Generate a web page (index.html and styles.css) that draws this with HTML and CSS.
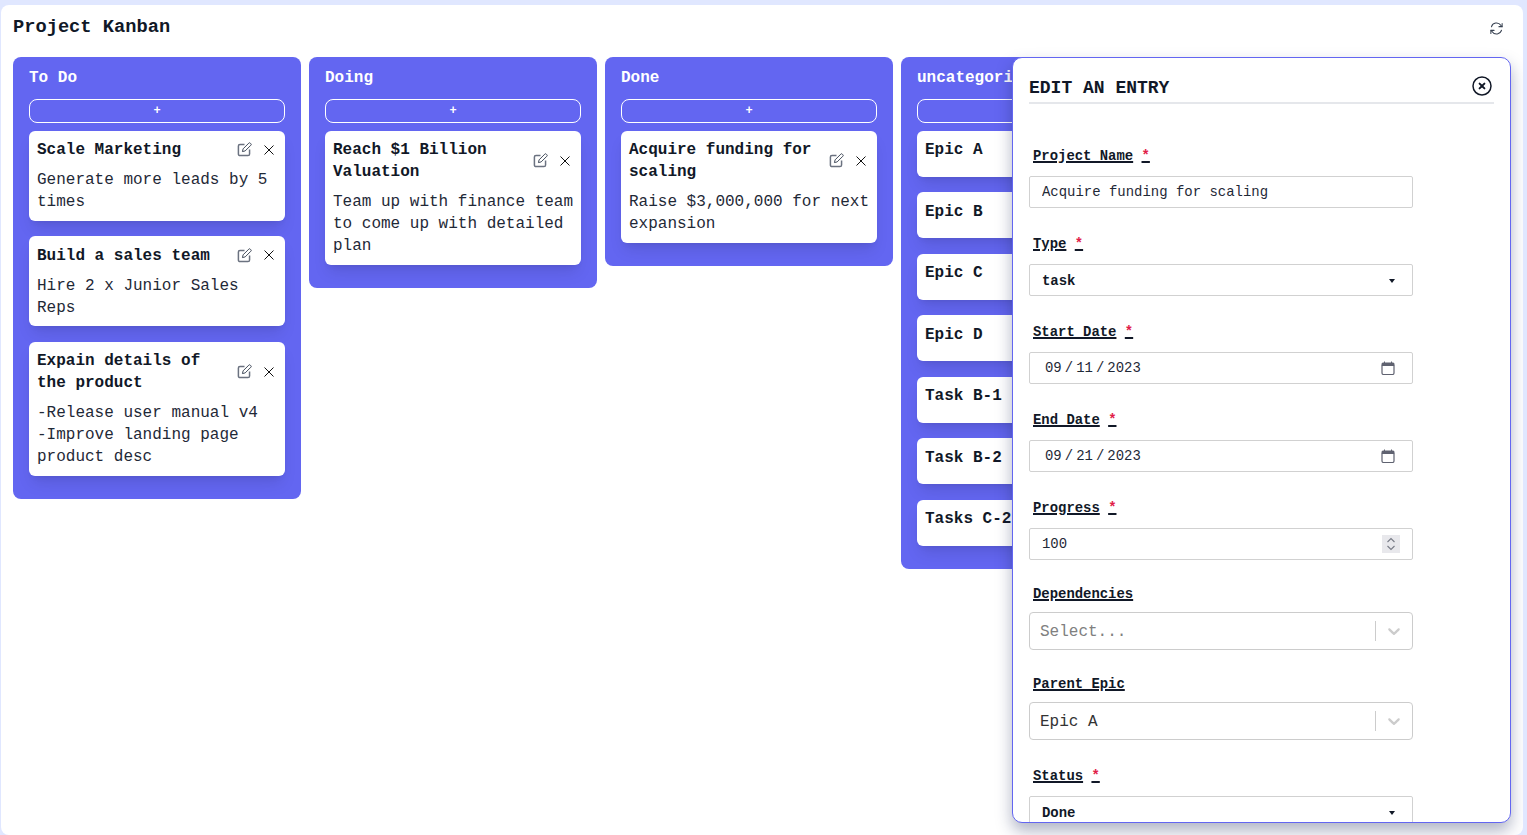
FILE: index.html
```html
<!DOCTYPE html>
<html lang="en">
<head>
<meta charset="utf-8">
<title>Project Kanban</title>
<link rel="stylesheet" href="styles.css">
</head>
<body>
<main class="panel">
  <header class="top">
    <h1 class="page-title">Project Kanban</h1>
    <button class="icon-btn refresh" aria-label="Refresh">
      <svg viewBox="0 0 16 16" width="15" height="15" fill="none" stroke="#374151" stroke-width="1.1" stroke-linecap="round" stroke-linejoin="round"><path d="M2.6 6.2A5.6 5.6 0 0 1 12.6 4.6L13.9 6"/><path d="M13.4 9.8A5.6 5.6 0 0 1 3.4 11.4L2.1 10"/><path d="M14 2.6V6h-3.4"/><path d="M2 13.4V10h3.4"/></svg>
    </button>
  </header>
  <section class="board">
    <div class="col">
      <h2 class="col-title">To Do</h2>
      <button class="add">+</button>
      <article class="card">
        <div class="card-head"><h3 class="card-title">Scale Marketing</h3>
          <div class="card-icons"><svg class="ico-edit" viewBox="0 0 16 16"><path d="M8 2.6H3.2A1.7 1.7 0 0 0 1.5 4.3v8.5a1.7 1.7 0 0 0 1.7 1.7h8.5a1.7 1.7 0 0 0 1.7-1.7V8"/><path class="pen" d="M5.8 10.2l.7-2.9L12.6 1.2a1 1 0 0 1 1.5 0l.7.7a1 1 0 0 1 0 1.5L8.7 9.5z"/></svg><svg class="ico-x" viewBox="0 0 12 12"><path d="M1.5 1.5l9 9M10.5 1.5l-9 9"/></svg></div></div>
        <p class="card-desc">Generate more leads by 5 times</p>
      </article>
      <article class="card">
        <div class="card-head"><h3 class="card-title">Build a sales team</h3>
          <div class="card-icons"><svg class="ico-edit" viewBox="0 0 16 16"><path d="M8 2.6H3.2A1.7 1.7 0 0 0 1.5 4.3v8.5a1.7 1.7 0 0 0 1.7 1.7h8.5a1.7 1.7 0 0 0 1.7-1.7V8"/><path class="pen" d="M5.8 10.2l.7-2.9L12.6 1.2a1 1 0 0 1 1.5 0l.7.7a1 1 0 0 1 0 1.5L8.7 9.5z"/></svg><svg class="ico-x" viewBox="0 0 12 12"><path d="M1.5 1.5l9 9M10.5 1.5l-9 9"/></svg></div></div>
        <p class="card-desc">Hire 2 x Junior Sales Reps</p>
      </article>
      <article class="card">
        <div class="card-head"><h3 class="card-title">Expain details of the product</h3>
          <div class="card-icons"><svg class="ico-edit" viewBox="0 0 16 16"><path d="M8 2.6H3.2A1.7 1.7 0 0 0 1.5 4.3v8.5a1.7 1.7 0 0 0 1.7 1.7h8.5a1.7 1.7 0 0 0 1.7-1.7V8"/><path class="pen" d="M5.8 10.2l.7-2.9L12.6 1.2a1 1 0 0 1 1.5 0l.7.7a1 1 0 0 1 0 1.5L8.7 9.5z"/></svg><svg class="ico-x" viewBox="0 0 12 12"><path d="M1.5 1.5l9 9M10.5 1.5l-9 9"/></svg></div></div>
        <p class="card-desc">-Release user manual v4<br>-Improve landing page product desc</p>
      </article>
    </div>
    <div class="col">
      <h2 class="col-title">Doing</h2>
      <button class="add">+</button>
      <article class="card">
        <div class="card-head"><h3 class="card-title">Reach $1 Billion Valuation</h3>
          <div class="card-icons"><svg class="ico-edit" viewBox="0 0 16 16"><path d="M8 2.6H3.2A1.7 1.7 0 0 0 1.5 4.3v8.5a1.7 1.7 0 0 0 1.7 1.7h8.5a1.7 1.7 0 0 0 1.7-1.7V8"/><path class="pen" d="M5.8 10.2l.7-2.9L12.6 1.2a1 1 0 0 1 1.5 0l.7.7a1 1 0 0 1 0 1.5L8.7 9.5z"/></svg><svg class="ico-x" viewBox="0 0 12 12"><path d="M1.5 1.5l9 9M10.5 1.5l-9 9"/></svg></div></div>
        <p class="card-desc">Team up with finance team to come up with detailed plan</p>
      </article>
    </div>
    <div class="col">
      <h2 class="col-title">Done</h2>
      <button class="add">+</button>
      <article class="card">
        <div class="card-head"><h3 class="card-title">Acquire funding for scaling</h3>
          <div class="card-icons"><svg class="ico-edit" viewBox="0 0 16 16"><path d="M8 2.6H3.2A1.7 1.7 0 0 0 1.5 4.3v8.5a1.7 1.7 0 0 0 1.7 1.7h8.5a1.7 1.7 0 0 0 1.7-1.7V8"/><path class="pen" d="M5.8 10.2l.7-2.9L12.6 1.2a1 1 0 0 1 1.5 0l.7.7a1 1 0 0 1 0 1.5L8.7 9.5z"/></svg><svg class="ico-x" viewBox="0 0 12 12"><path d="M1.5 1.5l9 9M10.5 1.5l-9 9"/></svg></div></div>
        <p class="card-desc">Raise $3,000,000 for next expansion</p>
      </article>
    </div>
    <div class="col">
      <h2 class="col-title">uncategorized</h2>
      <button class="add">+</button>
      <article class="card"><div class="card-head"><h3 class="card-title">Epic A</h3></div><p class="card-desc"></p></article>
      <article class="card"><div class="card-head"><h3 class="card-title">Epic B</h3></div><p class="card-desc"></p></article>
      <article class="card"><div class="card-head"><h3 class="card-title">Epic C</h3></div><p class="card-desc"></p></article>
      <article class="card"><div class="card-head"><h3 class="card-title">Epic D</h3></div><p class="card-desc"></p></article>
      <article class="card"><div class="card-head"><h3 class="card-title">Task B-1</h3></div><p class="card-desc"></p></article>
      <article class="card"><div class="card-head"><h3 class="card-title">Task B-2</h3></div><p class="card-desc"></p></article>
      <article class="card"><div class="card-head"><h3 class="card-title">Tasks C-2</h3></div><p class="card-desc"></p></article>
    </div>
  </section>

  <aside class="modal">
    <header class="modal-head">
      <h2 class="modal-title">EDIT AN ENTRY</h2>
      <button class="icon-btn close" aria-label="Close">
        <svg viewBox="0 0 20 20" width="20" height="20" fill="none" stroke="#111827" stroke-width="1.5" stroke-linecap="round"><circle cx="10" cy="10" r="9"/><path stroke-width="2" d="M7.6 7.6l4.8 4.8M12.4 7.6l-4.8 4.8"/></svg>
      </button>
    </header>
    <form class="form">
      <div class="field"><label class="label"><span class="ul">Project Name</span> <span class="ul star">*</span></label>
        <input class="control" type="text" value="Acquire funding for scaling"></div>
      <div class="field"><label class="label"><span class="ul">Type</span> <span class="ul star">*</span></label>
        <div class="select-wrap"><select class="control select"><option>task</option></select></div></div>
      <div class="field"><label class="label"><span class="ul">Start Date</span> <span class="ul star">*</span></label>
        <div class="control date"><span class="date-text">09 / 11 / 2023</span>
          <svg class="cal" viewBox="0 0 14 14" width="14" height="14"><path class="cal-top" d="M2 1.5h1V.5h1v1h6V.5h1v1h1A1.5 1.5 0 0 1 13.5 3v2H.5V3A1.5 1.5 0 0 1 2 1.5z"/><path class="cal-body" d="M1 4.5v7.500A1.500 1.500 0 0 0 2.500 13.500h9A1.500 1.500 0 0 0 13 12V4.500"/></svg></div></div>
      <div class="field"><label class="label"><span class="ul">End Date</span> <span class="ul star">*</span></label>
        <div class="control date"><span class="date-text">09 / 21 / 2023</span>
          <svg class="cal" viewBox="0 0 14 14" width="14" height="14"><path class="cal-top" d="M2 1.5h1V.5h1v1h6V.5h1v1h1A1.5 1.5 0 0 1 13.5 3v2H.5V3A1.5 1.5 0 0 1 2 1.5z"/><path class="cal-body" d="M1 4.5v7.500A1.500 1.500 0 0 0 2.500 13.500h9A1.500 1.500 0 0 0 13 12V4.500"/></svg></div></div>
      <div class="field"><label class="label"><span class="ul">Progress</span> <span class="ul star">*</span></label>
        <div class="control number"><span>100</span>
          <svg class="spin" viewBox="0 0 18 18" width="18" height="18"><path d="M5.500 7L9 3.500 12.500 7M5.500 11L9 14.500 12.500 11"/></svg></div></div>
      <div class="field field-rs"><label class="label"><span class="ul">Dependencies</span></label>
        <div class="rs"><span class="rs-value rs-placeholder">Select...</span><span class="rs-sep"></span>
          <svg class="rs-chev" viewBox="0 0 20 20" width="20" height="20"><path d="M4.516 7.548c.436-.446 1.043-.481 1.576 0L10 11.295l3.908-3.747c.533-.481 1.141-.446 1.574 0 .436.445.408 1.197 0 1.615-.406.418-4.695 4.502-4.695 4.502a1.095 1.095 0 0 1-1.576 0S4.924 9.581 4.516 9.163s-.436-1.17 0-1.615z"/></svg></div></div>
      <div class="field field-rs"><label class="label"><span class="ul">Parent Epic</span></label>
        <div class="rs"><span class="rs-value">Epic A</span><span class="rs-sep"></span>
          <svg class="rs-chev" viewBox="0 0 20 20" width="20" height="20"><path d="M4.516 7.548c.436-.446 1.043-.481 1.576 0L10 11.295l3.908-3.747c.533-.481 1.141-.446 1.574 0 .436.445.408 1.197 0 1.615-.406.418-4.695 4.502-4.695 4.502a1.095 1.095 0 0 1-1.576 0S4.924 9.581 4.516 9.163s-.436-1.17 0-1.615z"/></svg></div></div>
      <div class="field"><label class="label"><span class="ul">Status</span> <span class="ul star">*</span></label>
        <div class="select-wrap"><select class="control select"><option>Done</option></select></div></div>
    </form>
  </aside>
</main>
</body>
</html>
```
FILE: styles.css
```css
* { box-sizing: border-box; }
html, body { height: 100%; }
body {
  margin: 0;
  padding: 5px 4px 0 1px;
  background: #e0e7ff;
  font-family: "Liberation Mono", monospace;
  color: #111827;
  overflow: hidden;
}
.panel {
  position: relative;
  height: 830px;
  background: #fff;
  border-radius: 8px;
  padding: 8px 12px 0;
  overflow: hidden;
}
.top {
  display: flex;
  justify-content: space-between;
  align-items: center;
  height: 28px;
  margin-bottom: 16px;
}
.page-title { margin: 0; font-size: 18.72px; line-height: 28px; font-weight: 700; }
.icon-btn { background: none; border: 0; padding: 0; display: flex; cursor: pointer; }
.refresh { margin-right: 7.5px; margin-top: 2px; }
.board { display: flex; gap: 8px; align-items: flex-start; width: 1400px; }
.col {
  flex: 0 0 288px;
  background: #6366f1;
  border-radius: 8px;
  padding: 9px 16px 7.57px;
}
.col-title { margin: 0 0 9px; color: #fff; font-size: 16px; line-height: 24px; font-weight: 700; }
.add {
  display: block;
  width: 100%;
  height: 24px;
  margin-bottom: 8px;
  padding: 0;
  background: transparent;
  border: 1px solid #fff;
  border-radius: 8px;
  color: #fff;
  font: 700 12px/20px "Liberation Mono", monospace;
}
.card {
  background: #fff;
  border-radius: 6px;
  padding: 8.4px 7px 7.6px 8px;
  margin-bottom: 15.49px;
  box-shadow: 0 10px 15px -3px rgba(0,0,0,.1), 0 4px 6px -4px rgba(0,0,0,.1);
}
.card-head { display: flex; align-items: center; justify-content: space-between; }
.card-title { margin: 0; font-size: 16px; line-height: 22px; font-weight: 700; color: #111827; }
.card-head .card-title { flex: 1 1 0; min-width: 0; }
.card-desc { margin: 8px 0 0; font-size: 16px; line-height: 22px; color: #1f2937; }
.card-icons { flex: 0 0 auto; display: flex; align-items: center; gap: 11px; margin: -1px 3px 0 3px; }
.ico-edit { width: 15px; height: 15px; fill: none; stroke: #6b7280; stroke-width: 1.6; }
.ico-edit .pen { fill: #fff; stroke: #374151; stroke-width: 1; }
.ico-x { width: 12px; height: 12px; fill: none; stroke: #111; stroke-width: 1; }

.modal {
  position: absolute;
  left: 1011px;
  top: 52px;
  width: 499px;
  height: 766px;
  background: #fff;
  border: 1px solid #6366f1;
  border-radius: 10px;
  padding: 16px 16px 0;
  overflow: hidden;
  box-shadow: 0 8px 16px rgba(30,41,90,.35);
}
.modal-head {
  display: flex;
  justify-content: space-between;
  align-items: center;
  height: 30px;
  border-bottom: 2px solid #e5e7eb;
}
.modal-title { margin: 0; font-size: 18px; line-height: 28px; font-weight: 700; color: #111827; }
.close { margin-right: 2px; margin-top: -5px; }
.form { padding-top: 41px; width: 384px; }
.field { margin-bottom: 25px; }
.field-rs { margin-top: -2px; }
.field-rs .label { margin-bottom: 8px; }
.label {
  display: block;
  padding: 1px 0 0 4px;
  margin-bottom: 10px;
  font-size: 13.92px;
  line-height: 20px;
  font-weight: 700;
  color: #111827;
}
.ul { text-decoration: underline; text-decoration-color: #111827; text-decoration-thickness: 2px; }
.star { color: #e11d48; }
.control {
  display: block;
  width: 100%;
  height: 32px;
  padding: 0 12px;
  background: #fff;
  border: 1px solid #d1d1d1;
  border-radius: 2px;
  font: 400 13.96px "Liberation Mono", monospace;
  color: #1f2937;
  outline: none;
}
.select-wrap { position: relative; }
.select-wrap::after {
  content: "";
  position: absolute;
  right: 18px;
  top: 15px;
  border-left: 3.5px solid transparent;
  border-right: 3.5px solid transparent;
  border-top: 4px solid #111827;
}
.select { appearance: none; font-weight: 700; color: #111827; padding: 1px 12px 0; }
.date, .number { display: flex; align-items: center; justify-content: space-between; }
.date { padding: 0 17px 0 15px; }
.date-text { word-spacing: -5.35px; }
.number { padding-right: 12px; }
.cal-top { fill: #5f6270; }
.cal-body { fill: none; stroke: #5f6270; stroke-width: 1.200; }
.spin { background: #e8e8ec; fill: none; stroke: #777b86; stroke-width: 1.100; }
.rs {
  display: flex;
  align-items: center;
  height: 38px;
  border: 1px solid #ccc;
  border-radius: 4px;
  padding-left: 10px;
  background: #fff;
}
.rs-value { flex: 1; font-size: 16px; line-height: 20px; padding-top: 1px; color: #333; }
.rs-placeholder { color: #808080; }
.rs-sep { width: 1px; height: 20px; background: #ccc; }
.rs-chev { margin: 0 8px; fill: #ccc; }
```
